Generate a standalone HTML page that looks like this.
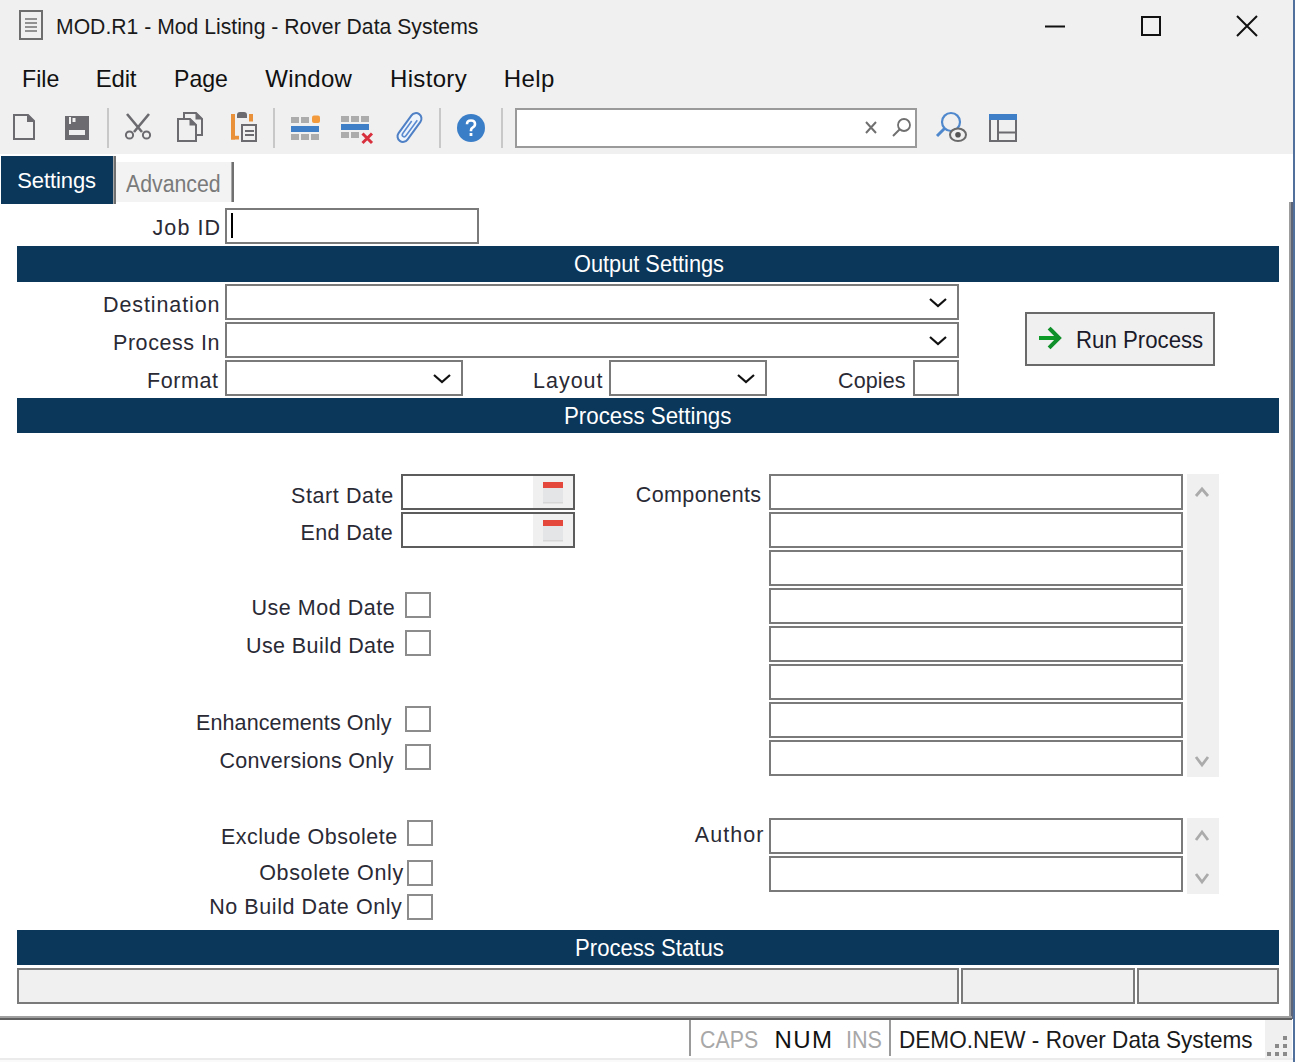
<!DOCTYPE html>
<html><head><meta charset="utf-8"><title>MOD.R1 - Mod Listing</title>
<style>
html,body{margin:0;padding:0;width:1295px;height:1062px;overflow:hidden;background:#fff;position:relative}
body>div{position:absolute;box-sizing:content-box}
.t{font-family:"Liberation Sans",sans-serif;white-space:pre}
svg{position:absolute;left:0;top:0}
</style></head><body>
<div style="left:0px;top:0px;width:1295px;height:154px;background:#f0f0f0;"></div>
<div style="left:1293px;top:0px;width:2px;height:1062px;background:#52709c;"></div>
<div style="left:1289px;top:202px;width:2px;height:817px;background:#9c9c9c;"></div>
<div style="left:1291px;top:202px;width:2px;height:817px;background:#5d6678;"></div>
<div style="left:1px;top:156px;width:112px;height:48px;background:#0b375b;"></div>
<div style="left:113px;top:156px;width:1px;height:48px;background:#a8a8a8;"></div>
<div style="left:114px;top:156px;width:2px;height:48px;background:#707070;"></div>
<div style="left:116px;top:162px;width:115px;height:40px;background:#f3f3f3;"></div>
<div style="left:231px;top:162px;width:1px;height:40px;background:#a8a8a8;"></div>
<div style="left:232px;top:162px;width:2px;height:40px;background:#707070;"></div>
<div style="left:225px;top:208px;width:250px;height:32px;background:#fff;border:2px solid #7a7a7a;"></div>
<div style="left:231px;top:213px;width:2px;height:25px;background:#000;"></div>
<div style="left:17px;top:246px;width:1262px;height:36px;background:#0b375b;"></div>
<div style="left:17px;top:398px;width:1262px;height:35px;background:#0b375b;"></div>
<div style="left:17px;top:930px;width:1262px;height:35px;background:#0b375b;"></div>
<div style="left:225px;top:284px;width:730px;height:32px;background:#fff;border:2px solid #7a7a7a;"></div>
<div style="left:225px;top:322px;width:730px;height:32px;background:#fff;border:2px solid #7a7a7a;"></div>
<div style="left:225px;top:360px;width:234px;height:32px;background:#fff;border:2px solid #7a7a7a;"></div>
<div style="left:609px;top:360px;width:154px;height:32px;background:#fff;border:2px solid #7a7a7a;"></div>
<div style="left:913px;top:360px;width:42px;height:32px;background:#fff;border:2px solid #7a7a7a;"></div>
<div style="left:1025px;top:312px;width:186px;height:50px;background:#f0f0f0;border:2px solid #6a6a6a;"></div>
<div style="left:401px;top:474px;width:170px;height:32px;background:#fff;border:2px solid #5c5c5c;"></div>
<div style="left:533px;top:476px;width:40px;height:32px;background:#f0f0f0;"></div>
<div style="left:401px;top:512px;width:170px;height:32px;background:#fff;border:2px solid #5c5c5c;"></div>
<div style="left:533px;top:514px;width:40px;height:32px;background:#f0f0f0;"></div>
<div style="left:405px;top:592px;width:22px;height:22px;background:#fff;border:2px solid #8c8c8c;"></div>
<div style="left:405px;top:630px;width:22px;height:22px;background:#fff;border:2px solid #8c8c8c;"></div>
<div style="left:405px;top:706px;width:22px;height:22px;background:#fff;border:2px solid #8c8c8c;"></div>
<div style="left:405px;top:744px;width:22px;height:22px;background:#fff;border:2px solid #8c8c8c;"></div>
<div style="left:407px;top:820px;width:22px;height:22px;background:#fff;border:2px solid #8c8c8c;"></div>
<div style="left:407px;top:860px;width:22px;height:22px;background:#fff;border:2px solid #8c8c8c;"></div>
<div style="left:407px;top:894px;width:22px;height:22px;background:#fff;border:2px solid #8c8c8c;"></div>
<div style="left:769px;top:474px;width:410px;height:32px;background:#fff;border:2px solid #7a7a7a;"></div>
<div style="left:769px;top:512px;width:410px;height:32px;background:#fff;border:2px solid #7a7a7a;"></div>
<div style="left:769px;top:550px;width:410px;height:32px;background:#fff;border:2px solid #7a7a7a;"></div>
<div style="left:769px;top:588px;width:410px;height:32px;background:#fff;border:2px solid #7a7a7a;"></div>
<div style="left:769px;top:626px;width:410px;height:32px;background:#fff;border:2px solid #7a7a7a;"></div>
<div style="left:769px;top:664px;width:410px;height:32px;background:#fff;border:2px solid #7a7a7a;"></div>
<div style="left:769px;top:702px;width:410px;height:32px;background:#fff;border:2px solid #7a7a7a;"></div>
<div style="left:769px;top:740px;width:410px;height:32px;background:#fff;border:2px solid #7a7a7a;"></div>
<div style="left:1187px;top:474px;width:32px;height:303px;background:#f0f0f0;"></div>
<div style="left:769px;top:818px;width:410px;height:32px;background:#fff;border:2px solid #7a7a7a;"></div>
<div style="left:769px;top:856px;width:410px;height:32px;background:#fff;border:2px solid #7a7a7a;"></div>
<div style="left:1187px;top:818px;width:32px;height:76px;background:#f0f0f0;"></div>
<div style="left:17px;top:968px;width:938px;height:32px;background:#f0f0f0;border:2px solid #7a7a7a;"></div>
<div style="left:961px;top:968px;width:170px;height:32px;background:#f0f0f0;border:2px solid #7a7a7a;"></div>
<div style="left:1137px;top:968px;width:138px;height:32px;background:#f0f0f0;border:2px solid #7a7a7a;"></div>
<div style="left:0px;top:1016px;width:1292px;height:2px;background:#a0a0a0;"></div>
<div style="left:0px;top:1018px;width:1292px;height:2px;background:#606060;"></div>
<div style="left:0px;top:1058px;width:1293px;height:2px;background:#ebebeb;"></div>
<div style="left:0px;top:1060px;width:1293px;height:2px;background:#fafafa;"></div>
<div style="left:689px;top:1020px;width:2px;height:36px;background:#9a9a9a;"></div>
<div style="left:889px;top:1020px;width:2px;height:36px;background:#9a9a9a;"></div>
<div style="left:1265px;top:1020px;width:27px;height:38px;background:#f0f0f0;"></div>
<div class="t" style="left:55.54px;top:15.9px;font-size:22px;line-height:22px;letter-spacing:0.0px;color:#1a1a1a;transform:scaleX(0.9623);transform-origin:0 0;">MOD.R1 - Mod Listing - Rover Data Systems</div>
<div class="t" style="left:22.37px;top:67.4px;font-size:24px;line-height:24px;letter-spacing:0.0px;color:#111;transform:scaleX(0.9639);transform-origin:0 0;">File</div>
<div class="t" style="left:95.8px;top:67.4px;font-size:24px;line-height:24px;letter-spacing:-0.233px;color:#111;">Edit</div>
<div class="t" style="left:174.08px;top:67.4px;font-size:24px;line-height:24px;letter-spacing:0.0px;color:#111;transform:scaleX(0.9623);transform-origin:0 0;">Page</div>
<div class="t" style="left:265.3px;top:67.4px;font-size:24px;line-height:24px;letter-spacing:0.24px;color:#111;">Window</div>
<div class="t" style="left:390.0px;top:67.4px;font-size:24px;line-height:24px;letter-spacing:0.333px;color:#111;">History</div>
<div class="t" style="left:503.7px;top:67.4px;font-size:24px;line-height:24px;letter-spacing:0.433px;color:#111;">Help</div>
<div class="t" style="left:17.3px;top:169.6px;font-size:22px;line-height:22px;letter-spacing:-0.1px;color:#fff;">Settings</div>
<div class="t" style="left:125.5px;top:172.5px;font-size:23px;line-height:23px;letter-spacing:0.0px;color:#7a7a7a;transform:scaleX(0.9257);transform-origin:0 0;">Advanced</div>
<div class="t" style="left:152.5px;top:218.0px;font-size:21.5px;line-height:21.5px;letter-spacing:1.1px;color:#2a2a35;">Job ID</div>
<div class="t" style="left:573.69px;top:251.7px;font-size:24px;line-height:24px;letter-spacing:0.0px;color:#fff;transform:scaleX(0.9067);transform-origin:0 0;">Output Settings</div>
<div class="t" style="left:103.0px;top:295.0px;font-size:21.5px;line-height:21.5px;letter-spacing:0.9px;color:#2a2a35;">Destination</div>
<div class="t" style="left:113.0px;top:333.0px;font-size:21.5px;line-height:21.5px;letter-spacing:0.556px;color:#2a2a35;">Process In</div>
<div class="t" style="left:147.0px;top:371.0px;font-size:21.5px;line-height:21.5px;letter-spacing:0.6px;color:#2a2a35;">Format</div>
<div class="t" style="left:533.0px;top:370.9px;font-size:21.5px;line-height:21.5px;letter-spacing:1.0px;color:#2a2a35;">Layout</div>
<div class="t" style="left:838.0px;top:371.0px;font-size:21.5px;line-height:21.5px;letter-spacing:0.12px;color:#2a2a35;">Copies</div>
<div class="t" style="left:1076.15px;top:327.6px;font-size:24px;line-height:24px;letter-spacing:0.0px;color:#1a1a2a;transform:scaleX(0.9259);transform-origin:0 0;">Run Process</div>
<div class="t" style="left:564.44px;top:403.5px;font-size:24px;line-height:24px;letter-spacing:0.0px;color:#fff;transform:scaleX(0.9292);transform-origin:0 0;">Process Settings</div>
<div class="t" style="left:291.0px;top:485.5px;font-size:21.5px;line-height:21.5px;letter-spacing:0.6px;color:#2a2a35;">Start Date</div>
<div class="t" style="left:300.6px;top:522.8px;font-size:21.5px;line-height:21.5px;letter-spacing:0.343px;color:#2a2a35;">End Date</div>
<div class="t" style="left:635.8px;top:485.1px;font-size:21.5px;line-height:21.5px;letter-spacing:0.378px;color:#2a2a35;">Components</div>
<div class="t" style="left:251.4px;top:598.4px;font-size:21.5px;line-height:21.5px;letter-spacing:0.545px;color:#2a2a35;">Use Mod Date</div>
<div class="t" style="left:246.0px;top:636.3px;font-size:21.5px;line-height:21.5px;letter-spacing:0.415px;color:#2a2a35;">Use Build Date</div>
<div class="t" style="left:196.0px;top:712.8px;font-size:21.5px;line-height:21.5px;letter-spacing:0.113px;color:#2a2a35;">Enhancements Only</div>
<div class="t" style="left:219.4px;top:750.8px;font-size:21.5px;line-height:21.5px;letter-spacing:0.287px;color:#2a2a35;">Conversions Only</div>
<div class="t" style="left:220.9px;top:826.9px;font-size:21.5px;line-height:21.5px;letter-spacing:0.527px;color:#2a2a35;">Exclude Obsolete</div>
<div class="t" style="left:694.8px;top:825.0px;font-size:21.5px;line-height:21.5px;letter-spacing:1.04px;color:#2a2a35;">Author</div>
<div class="t" style="left:259.2px;top:863.0px;font-size:21.5px;line-height:21.5px;letter-spacing:0.65px;color:#2a2a35;">Obsolete Only</div>
<div class="t" style="left:209.2px;top:896.8px;font-size:21.5px;line-height:21.5px;letter-spacing:0.576px;color:#2a2a35;">No Build Date Only</div>
<div class="t" style="left:574.86px;top:935.6px;font-size:24px;line-height:24px;letter-spacing:0.0px;color:#fff;transform:scaleX(0.922);transform-origin:0 0;">Process Status</div>
<div class="t" style="left:699.51px;top:1027.7px;font-size:24px;line-height:24px;letter-spacing:0.0px;color:#a8a8a8;transform:scaleX(0.8891);transform-origin:0 0;">CAPS</div>
<div class="t" style="left:774.5px;top:1027.7px;font-size:24px;line-height:24px;letter-spacing:1.45px;color:#111;">NUM</div>
<div class="t" style="left:845.51px;top:1027.7px;font-size:24px;line-height:24px;letter-spacing:0.0px;color:#a8a8a8;transform:scaleX(0.8973);transform-origin:0 0;">INS</div>
<div class="t" style="left:899.32px;top:1027.6px;font-size:24px;line-height:24px;letter-spacing:0.0px;color:#1a1a1a;transform:scaleX(0.9401);transform-origin:0 0;">DEMO.NEW - Rover Data Systems</div>
<svg width="1295" height="1062" viewBox="0 0 1295 1062" style="position:absolute;left:0;top:0">
<!-- doc icon -->
<rect x="20" y="11" width="22" height="28" fill="none" stroke="#6e6e6e" stroke-width="2"/>
<g stroke="#7a7a7a" stroke-width="1.6"><line x1="25" y1="19" x2="37" y2="19"/><line x1="25" y1="23" x2="37" y2="23"/><line x1="25" y1="27" x2="37" y2="27"/><line x1="25" y1="31" x2="37" y2="31"/></g>
<!-- window controls -->
<rect x="1045" y="25.5" width="20" height="2" fill="#111"/>
<rect x="1142" y="17" width="18" height="18" fill="none" stroke="#111" stroke-width="2"/>
<path d="M1237 16 L1257 36 M1257 16 L1237 36" stroke="#111" stroke-width="2"/>
<!-- toolbar -->
<path d="M14 115 H28 L34 121 V139 H14 Z" fill="none" stroke="#6b6b70" stroke-width="2"/>
<path d="M28 115 V121 H34" fill="#6b6b70" stroke="#6b6b70" stroke-width="2"/>
<!-- save -->
<path d="M65 116 H89 V140 H65 Z" fill="#6b6b70"/>
<rect x="69" y="117" width="12" height="7" fill="#f0f0f0"/>
<rect x="71" y="117" width="10" height="7" fill="#6b6b70"/>
<rect x="72.5" y="118" width="3" height="4" fill="#f0f0f0"/>
<rect x="69" y="130" width="16" height="5" fill="#f0f0f0"/>
<rect x="107" y="108" width="2" height="40" fill="#c8c8c8"/>
<!-- scissors -->
<path d="M127 114 L142 132 M149 114 L134 132" stroke="#6b6b70" stroke-width="2.6"/>
<circle cx="129.5" cy="135" r="3.6" fill="none" stroke="#6b6b70" stroke-width="2"/>
<circle cx="146.5" cy="135" r="3.6" fill="none" stroke="#6b6b70" stroke-width="2"/>
<!-- copy -->
<path d="M184 120 V113 H196 L202 119 V135 H196" fill="#f0f0f0" stroke="#6b6b70" stroke-width="2"/>
<path d="M195.5 112 L203 119.5 H195.5 Z" fill="#6b6b70"/>
<path d="M178 119 H190 L196 125 V141 H178 Z" fill="#f0f0f0" stroke="#6b6b70" stroke-width="2"/>
<path d="M189.5 118 L197 125.5 H189.5 Z" fill="#6b6b70"/>
<!-- paste -->
<rect x="231" y="114" width="4" height="25.5" fill="#e8913a"/>
<rect x="231" y="135.8" width="8" height="3.7" fill="#e8913a"/>
<rect x="249" y="114" width="4" height="7.5" fill="#e8913a"/>
<path d="M237 118 V115 Q237 112 240 112 H244 Q247 112 247 115 V118 Z" fill="#6b6b70"/>
<rect x="242" y="125" width="14" height="16" fill="#f0f0f0" stroke="#6b6b70" stroke-width="2"/>
<rect x="245" y="130" width="9" height="2" fill="#6b6b70"/><rect x="245" y="134" width="9" height="2" fill="#6b6b70"/>
<rect x="273" y="108" width="2" height="40" fill="#c8c8c8"/>
<!-- grid add -->
<g fill="#acacac"><rect x="291" y="117" width="8" height="6"/><rect x="301" y="117" width="8" height="6"/>
<rect x="291" y="134" width="8" height="6"/><rect x="301" y="134" width="8" height="6"/><rect x="311" y="134" width="8" height="6"/></g>
<rect x="291" y="126" width="28" height="6" fill="#3f7fc8"/>
<rect x="312" y="115.5" width="8" height="7.5" rx="2" fill="#f39a3c"/>
<!-- grid del -->
<g fill="#acacac"><rect x="341" y="116" width="8" height="6"/><rect x="351" y="116" width="8" height="6"/><rect x="361" y="116" width="8" height="6"/>
<rect x="341" y="132" width="8" height="6"/><rect x="351" y="132" width="8" height="6"/></g>
<rect x="341" y="124" width="28" height="6" fill="#3f7fc8"/>
<path d="M362.5 133.5 L372 143 M372 133.5 L362.5 143" stroke="#d9303e" stroke-width="3"/>
<!-- paperclip -->
<g transform="rotate(36 409.5 127.5)">
<rect x="404" y="111" width="11" height="33" rx="5.5" fill="#eef4fb" stroke="#4f80c6" stroke-width="2"/>
<path d="M407.5 121 V136 Q407.5 138.5 409.5 138.5 Q411.5 138.5 411.5 136 V117" fill="none" stroke="#5a8ad0" stroke-width="1.6"/>
</g>
<rect x="439" y="108" width="2" height="40" fill="#c8c8c8"/>
<!-- help -->
<circle cx="471" cy="128" r="14" fill="#3b7ec8"/>
<path d="M467 124.2 Q467 120.5 471 120.5 Q475 120.5 475 124 Q475 126.3 472.6 127.6 Q471 128.5 471 130.3 V131.2" fill="none" stroke="#fff" stroke-width="2.6"/><rect x="469.6" y="133" width="2.8" height="3" fill="#fff"/>
<rect x="501" y="108" width="2" height="40" fill="#c8c8c8"/>
<!-- search box -->
<rect x="516" y="109" width="400" height="38" fill="#fff" stroke="#9a9a9a" stroke-width="2"/>
<path d="M866 122 L876 133 M876 122 L866 133" stroke="#707070" stroke-width="2"/>
<circle cx="904" cy="125" r="6" fill="none" stroke="#707070" stroke-width="1.8"/>
<path d="M899.5 129.5 L893 136" stroke="#707070" stroke-width="2"/>
<!-- find -->
<circle cx="951" cy="122" r="9" fill="none" stroke="#4f88cc" stroke-width="2.2"/>
<path d="M944.5 128.5 L937 136" stroke="#4f88cc" stroke-width="3"/>
<ellipse cx="958" cy="134.8" rx="8" ry="6.3" fill="#f0f0f0" stroke="#6a6a6a" stroke-width="2"/>
<circle cx="958" cy="134.8" r="2.8" fill="#555"/>
<!-- layout -->
<rect x="990" y="115" width="26" height="26" fill="none" stroke="#6b6b70" stroke-width="2"/>
<rect x="989" y="114" width="28" height="6" fill="#3f7fc8"/>
<path d="M998 120 V141 M998 132.5 H1016" stroke="#6b6b70" stroke-width="2"/>
<!-- chevrons -->
<g fill="none" stroke="#111" stroke-width="2.2">
<path d="M930 299 L938 306 L946 299"/>
<path d="M930 337 L938 344 L946 337"/>
<path d="M434 375 L442 382 L450 375"/>
<path d="M738 375 L746 382 L754 375"/>
</g>
<!-- run arrow -->
<path d="M1039 338 H1060" stroke="#0e9a26" stroke-width="4"/><path d="M1050.5 329.5 L1059 338 L1050.5 346.5" fill="none" stroke="#10902a" stroke-width="4" stroke-linecap="square"/>
<!-- calendar icons -->
<rect x="543" y="482" width="20" height="6" fill="#e4483c"/>
<rect x="543" y="488" width="20" height="15" fill="#e3e5e7"/>
<rect x="543" y="502" width="20" height="1.5" fill="#d6d6d6"/>
<rect x="543" y="520" width="20" height="6" fill="#e4483c"/>
<rect x="543" y="526" width="20" height="15" fill="#e3e5e7"/>
<rect x="543" y="540" width="20" height="1.5" fill="#d6d6d6"/>
<!-- scroll arrows -->
<g fill="none" stroke="#ababab" stroke-width="2.8">
<path d="M1196 496 L1202 489 L1208 496"/>
<path d="M1196 757 L1202 765 L1208 757"/>
<path d="M1196 840 L1202 832 L1208 840"/>
<path d="M1196 874 L1202 882 L1208 874"/>
</g>
<!-- grip -->
<g fill="#8a8a8a">
<rect x="1283" y="1036" width="4" height="4"/>
<rect x="1275" y="1044" width="4" height="4"/><rect x="1283" y="1044" width="4" height="4"/>
<rect x="1267" y="1052" width="4" height="4"/><rect x="1275" y="1052" width="4" height="4"/><rect x="1283" y="1052" width="4" height="4"/>
</g>
</svg>

</body></html>
